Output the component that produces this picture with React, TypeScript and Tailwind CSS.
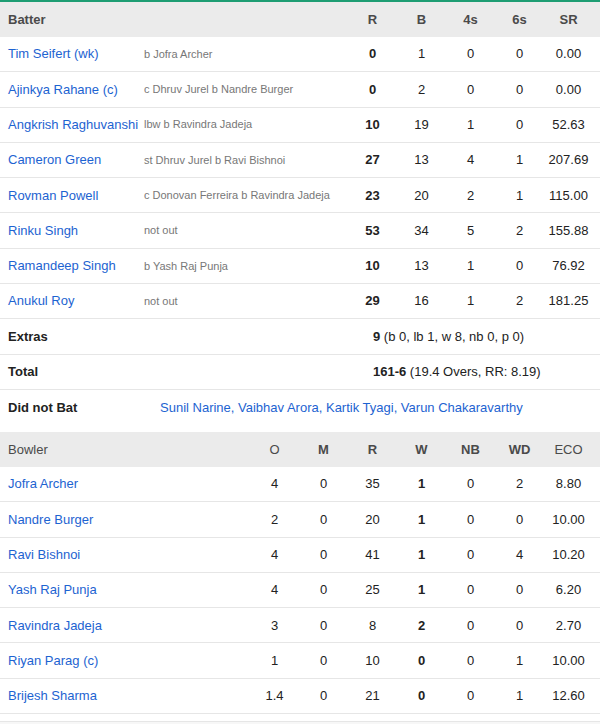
import React from "react";

const batters = [
  ["Tim Seifert (wk)", "b Jofra Archer", "0", "1", "0", "0", "0.00"],
  ["Ajinkya Rahane (c)", "c Dhruv Jurel b Nandre Burger", "0", "2", "0", "0", "0.00"],
  ["Angkrish Raghuvanshi", "lbw b Ravindra Jadeja", "10", "19", "1", "0", "52.63"],
  ["Cameron Green", "st Dhruv Jurel b Ravi Bishnoi", "27", "13", "4", "1", "207.69"],
  ["Rovman Powell", "c Donovan Ferreira b Ravindra Jadeja", "23", "20", "2", "1", "115.00"],
  ["Rinku Singh", "not out", "53", "34", "5", "2", "155.88"],
  ["Ramandeep Singh", "b Yash Raj Punja", "10", "13", "1", "0", "76.92"],
  ["Anukul Roy", "not out", "29", "16", "1", "2", "181.25"],
];

const bowlers = [
  ["Jofra Archer", "4", "0", "35", "1", "0", "2", "8.80"],
  ["Nandre Burger", "2", "0", "20", "1", "0", "0", "10.00"],
  ["Ravi Bishnoi", "4", "0", "41", "1", "0", "4", "10.20"],
  ["Yash Raj Punja", "4", "0", "25", "1", "0", "0", "6.20"],
  ["Ravindra Jadeja", "3", "0", "8", "2", "0", "0", "2.70"],
  ["Riyan Parag (c)", "1", "0", "10", "0", "0", "1", "10.00"],
  ["Brijesh Sharma", "1.4", "0", "21", "0", "0", "1", "12.60"],
];

const batGrid = "grid grid-cols-[136px_204px_49px_49px_49px_49px_49px] pl-2 pr-[7px] items-center";
const bowlGrid = "grid grid-cols-[242px_49px_49px_49px_49px_49px_49px_49px] pl-2 pr-[7px] items-center";

export default function App() {
  return (
    <div
      className="w-[600px] h-[724px] overflow-hidden bg-white text-[13px] text-[#222]"
      style={{ fontFamily: '"Liberation Sans", Arial, sans-serif' }}
    >
      <div className="h-[2px] bg-[#1e9d73]" />
      <div className={`${batGrid} h-[35px] bg-[#ebebeb] font-bold text-[#4a4a4a]`}>
        <div>Batter</div>
        <div />
        <div className="text-center">R</div>
        <div className="text-center">B</div>
        <div className="text-center">4s</div>
        <div className="text-center">6s</div>
        <div className="text-center">SR</div>
      </div>
      {batters.map((b) => (
        <div key={b[0]} className={`${batGrid} h-[35.3px] border-b border-[#e6e6e6]`}>
          <div className="text-[#1d63d1] whitespace-nowrap">{b[0]}</div>
          <div className="text-[11px] text-[#777] whitespace-nowrap">{b[1]}</div>
          <div className="text-center font-bold">{b[2]}</div>
          <div className="text-center">{b[3]}</div>
          <div className="text-center">{b[4]}</div>
          <div className="text-center">{b[5]}</div>
          <div className="text-center">{b[6]}</div>
        </div>
      ))}
      <div className="flex items-center h-[35.3px] border-b border-[#e6e6e6] pl-2">
        <div className="w-[365px] font-bold">Extras</div>
        <div>
          <span className="font-bold">9</span> (b 0, lb 1, w 8, nb 0, p 0)
        </div>
      </div>
      <div className="flex items-center h-[35.3px] border-b border-[#e6e6e6] pl-2">
        <div className="w-[365px] font-bold">Total</div>
        <div>
          <span className="font-bold">161-6</span> (19.4 Overs, RR: 8.19)
        </div>
      </div>
      <div className="flex items-center h-[35px] pl-2 mb-[7px]">
        <div className="w-[152px] font-bold">Did not Bat</div>
        <div className="text-[#1d63d1]">Sunil Narine, Vaibhav Arora, Kartik Tyagi, Varun Chakaravarthy</div>
      </div>
      <div className={`${bowlGrid} h-[35px] bg-[#ebebeb] font-bold text-[#4a4a4a]`}>
        <div className="font-normal">Bowler</div>
        <div className="text-center font-normal">O</div>
        <div className="text-center">M</div>
        <div className="text-center">R</div>
        <div className="text-center">W</div>
        <div className="text-center">NB</div>
        <div className="text-center">WD</div>
        <div className="text-center font-normal">ECO</div>
      </div>
      {bowlers.map((b) => (
        <div key={b[0]} className={`${bowlGrid} h-[35.3px] border-b border-[#e6e6e6]`}>
          <div className="text-[#1d63d1] whitespace-nowrap">{b[0]}</div>
          <div className="text-center">{b[1]}</div>
          <div className="text-center">{b[2]}</div>
          <div className="text-center">{b[3]}</div>
          <div className="text-center font-bold">{b[4]}</div>
          <div className="text-center">{b[5]}</div>
          <div className="text-center">{b[6]}</div>
          <div className="text-center">{b[7]}</div>
        </div>
      ))}
      <div className="mt-[7px] h-[10px] border-t border-[#e6e6e6] bg-[#f7f7f7]" />
    </div>
  );
}
